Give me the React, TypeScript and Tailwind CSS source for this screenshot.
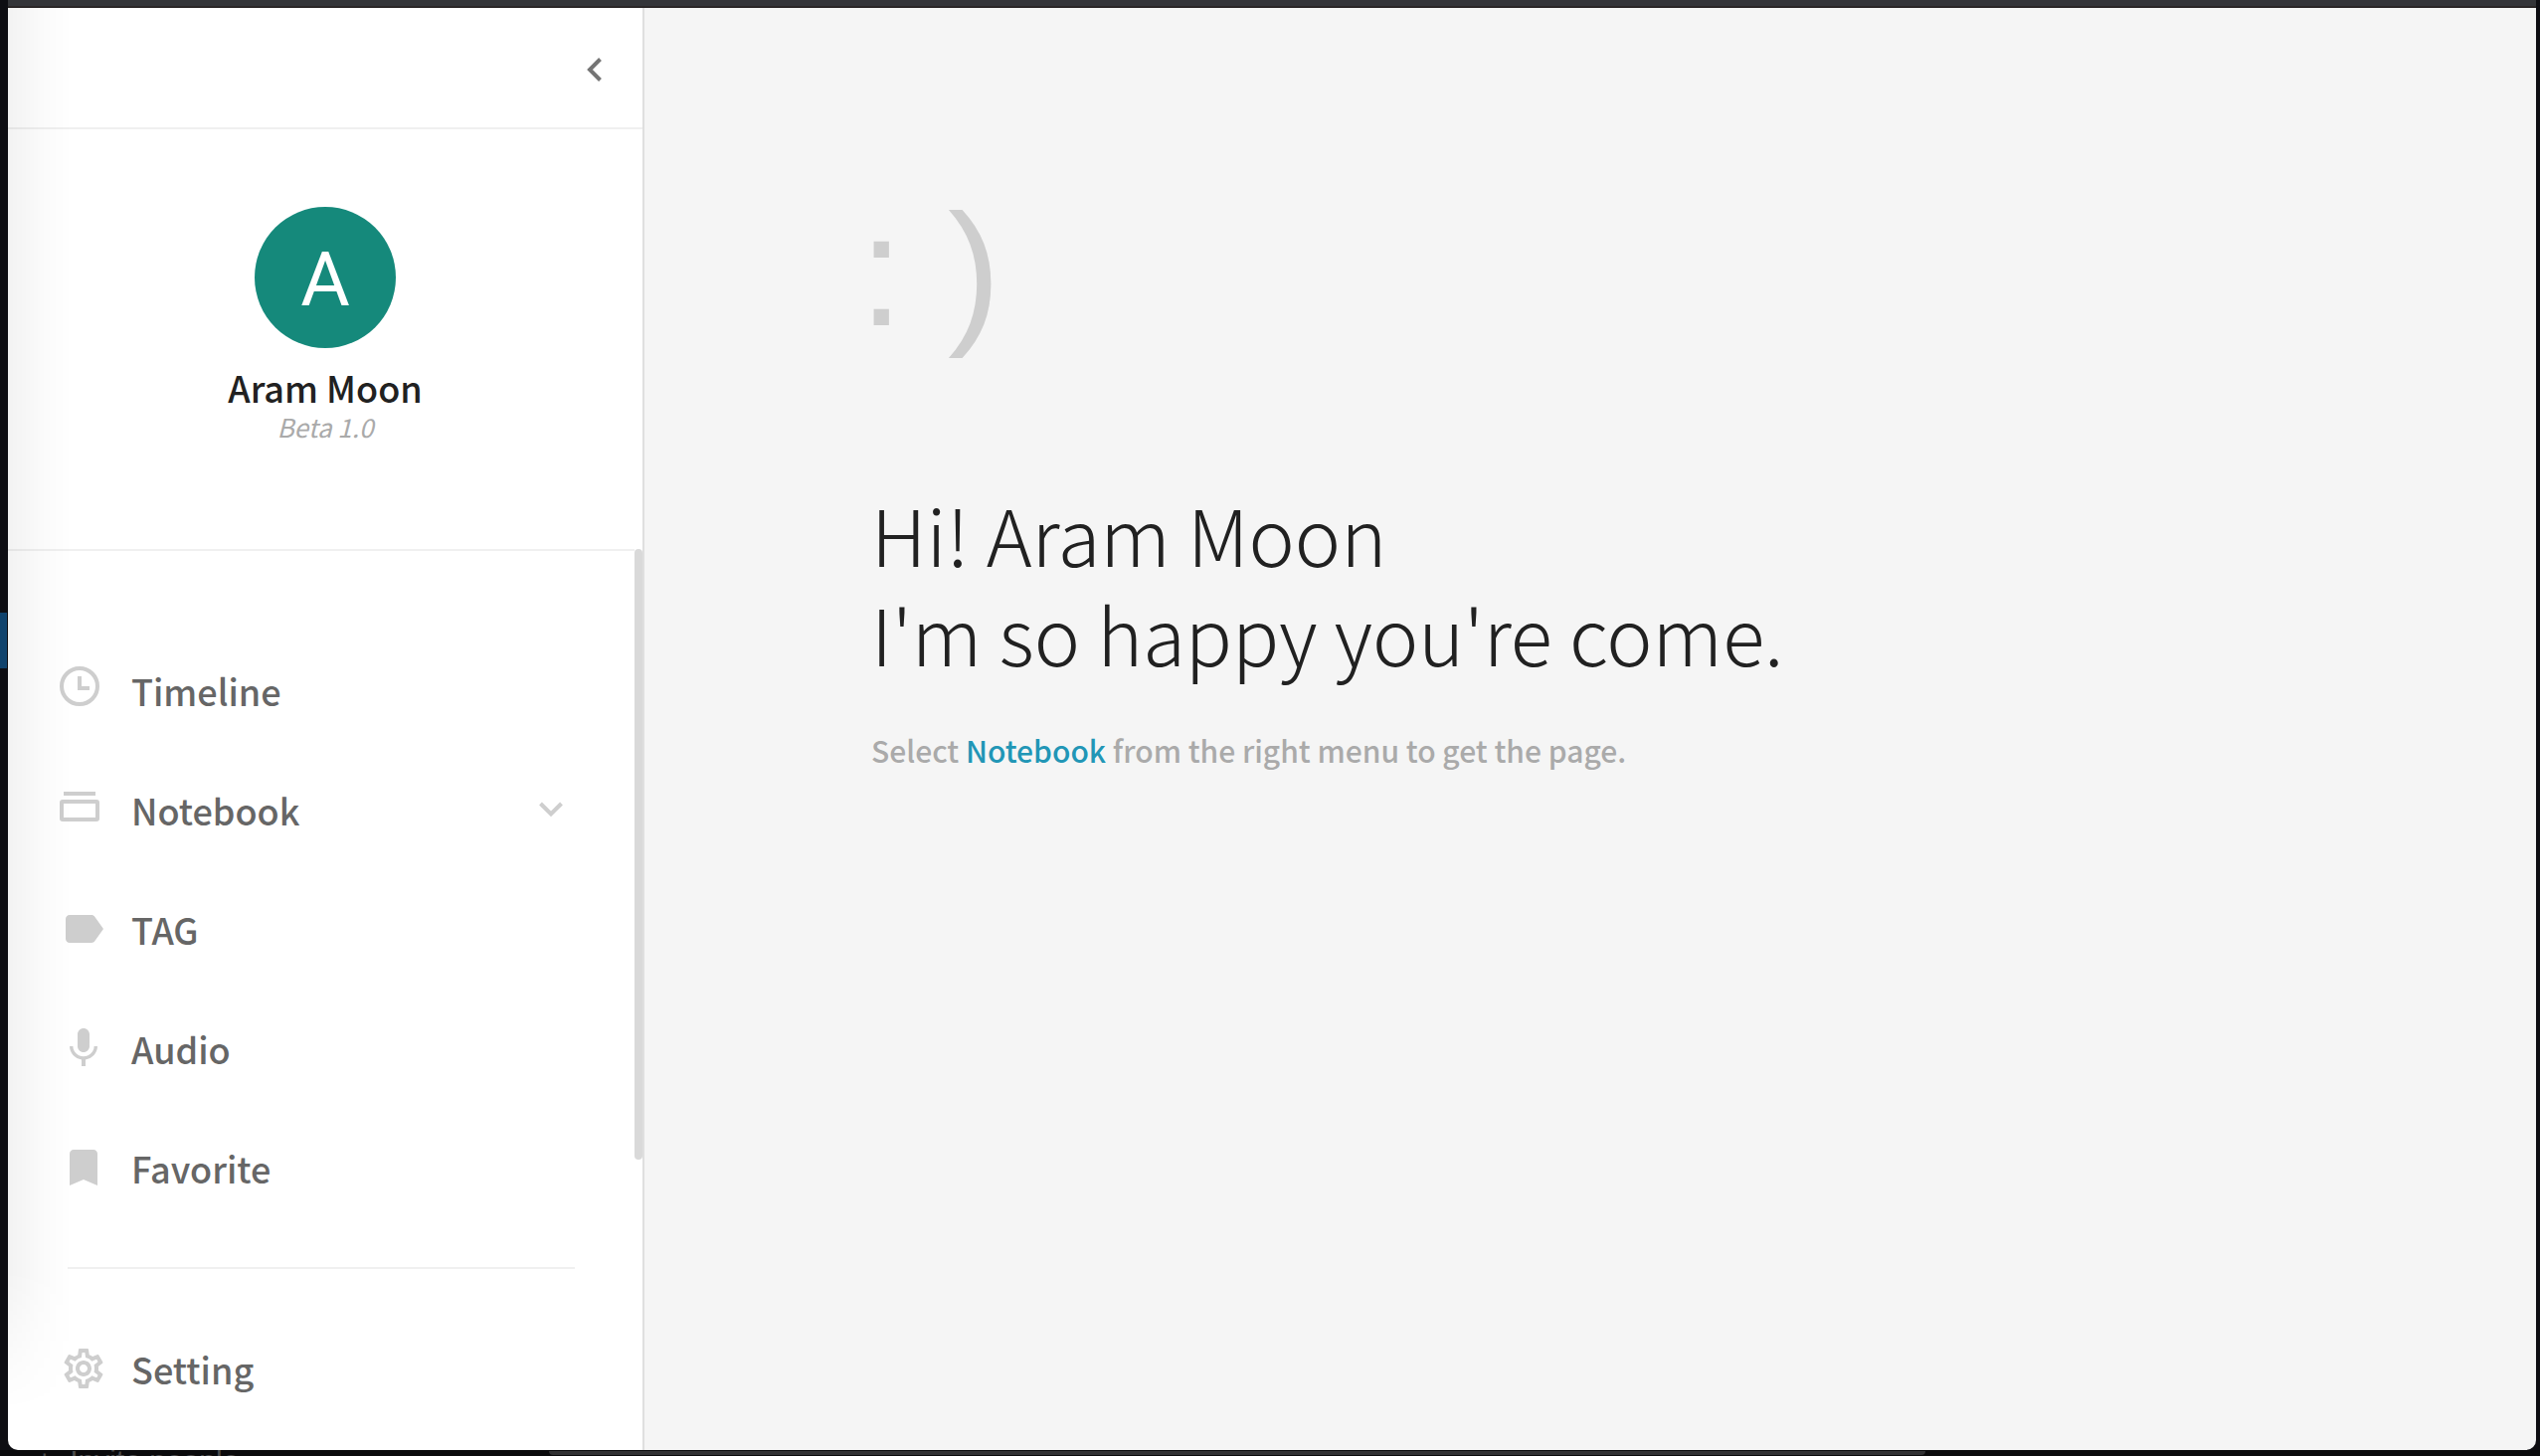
import React from 'react';
import { MdBookmark, MdLabel, MdMic } from 'react-icons/md';

interface MenuItem {
  label: string;
  icon: React.ReactNode;
  expandable?: boolean;
}

const ClockIcon = () => (
  <svg viewBox="0 0 40 40" className="size-10" fill="none" stroke="currentColor" strokeWidth="4">
    <circle cx="20" cy="20" r="18" />
    <path d="M20 10v12h10" />
  </svg>
);

const NotebookIcon = () => (
  <svg viewBox="0 0 40 40" className="size-10" fill="none" stroke="currentColor" strokeWidth="4">
    <path d="M4 8h32" />
    <rect x="2" y="16" width="36" height="18" rx="1" />
  </svg>
);

const SettingIcon = () => (
  <svg viewBox="0 0 24 24" className="size-12" fill="currentColor">
    <path d="M19.43 12.98c.04-.32.07-.64.07-.98 0-.34-.03-.66-.07-.98l2.11-1.65c.19-.15.24-.42.12-.64l-2-3.46c-.09-.16-.26-.25-.44-.25-.06 0-.12.01-.17.03l-2.49 1c-.52-.4-1.08-.73-1.69-.98l-.38-2.65C14.46 2.18 14.25 2 14 2h-4c-.25 0-.46.18-.49.42l-.38 2.65c-.61.25-1.17.59-1.69.98l-2.49-1c-.06-.02-.12-.03-.18-.03-.17 0-.34.09-.43.25l-2 3.46c-.13.22-.07.49.12.64l2.11 1.65c-.04.32-.07.65-.07.98 0 .33.03.66.07.98l-2.11 1.65c-.19.15-.24.42-.12.64l2 3.46c.09.16.26.25.44.25.06 0 .12-.01.17-.03l2.49-1c.52.4 1.08.73 1.69.98l.38 2.65c.03.24.24.42.49.42h4c.25 0 .46-.18.49-.42l.38-2.65c.61-.25 1.17-.59 1.69-.98l2.49 1c.06.02.12.03.18.03.17 0 .34-.09.43-.25l2-3.46c.12-.22.07-.49-.12-.64l-2.11-1.65zm-1.98-1.71c.04.31.05.52.05.73 0 .21-.02.43-.05.73l-.14 1.13.89.7 1.08.84-.7 1.21-1.27-.51-1.04-.42-.9.68c-.43.32-.84.56-1.25.73l-1.06.43-.16 1.13-.2 1.35h-1.4l-.19-1.35-.16-1.13-1.06-.43c-.43-.18-.83-.41-1.23-.71l-.91-.7-1.06.43-1.27.51-.7-1.21 1.08-.84.89-.7-.14-1.13c-.03-.31-.05-.54-.05-.74s.02-.43.05-.73l.14-1.13-.89-.7-1.08-.84.7-1.21 1.27.51 1.04.42.9-.68c.43-.32.84-.56 1.25-.73l1.06-.43.16-1.13.2-1.35h1.39l.19 1.35.16 1.13 1.06.43c.43.18.83.41 1.23.71l.91.7 1.06-.43 1.27-.51.7 1.21-1.07.85-.89.7.14 1.13zM12 8c-2.21 0-4 1.79-4 4s1.79 4 4 4 4-1.79 4-4-1.79-4-4-4zm0 6c-1.1 0-2-.9-2-2s.9-2 2-2 2 .9 2 2-.9 2-2 2z" />
  </svg>
);

const menu: MenuItem[] = [
  { label: 'Timeline', icon: <ClockIcon /> },
  { label: 'Notebook', icon: <NotebookIcon />, expandable: true },
  { label: 'TAG', icon: <MdLabel className="size-12" /> },
  { label: 'Audio', icon: <MdMic className="size-12" /> },
  { label: 'Favorite', icon: <MdBookmark className="size-12" /> },
];

const MenuRow: React.FC<{ item: MenuItem }> = ({ item }) => (
  <li>
    <button className="flex h-[120px] w-full items-center pr-18 pl-13 text-left">
      <span className="size-12 shrink-0 text-[#cecece]">{item.icon}</span>
      <span className="ml-6 flex-1 text-4xl font-medium text-[#666]">{item.label}</span>
      {item.expandable && (
        <svg viewBox="0 0 24 16" className="h-4 w-6 text-[#cecece]" fill="none" stroke="currentColor" strokeWidth="4">
          <path d="M1.5 2 12 12.5 22.5 2" />
        </svg>
      )}
    </button>
  </li>
);

const Sidebar = () => (
  <aside className="relative flex w-[640px] shrink-0 flex-col border-r-2 border-[#dfdfdf] bg-white">
    <div className="flex h-[122px] items-center justify-end border-b-2 border-[#f0f0f0] pt-1 pr-10">
      <button aria-label="Close menu" className="text-[#757575]">
        <svg viewBox="0 0 16 24" className="h-6 w-4" fill="none" stroke="currentColor" strokeWidth="4">
          <path d="M13.5 1.5 3 12 13.5 22.5" />
        </svg>
      </button>
    </div>

    <div className="flex h-[422px] flex-col items-center pt-[78px]">
      <div className="flex size-[142px] items-center justify-center rounded-full bg-[#15897b] pt-1 font-['Roboto'] text-[76px] text-white">A</div>
      <p className="mt-4 text-4xl leading-[46px] font-medium text-[#212121]">Aram Moon</p>
      <p className="text-[26px] leading-[34px] text-[#aaa] italic">Beta 1.0</p>
    </div>

    <nav className="flex flex-1">
      <div className="flex-1 border-t-2 border-[#f0f0f0] pt-20">
        <ul>
          {menu.map((item) => (
            <MenuRow key={item.label} item={item} />
          ))}
        </ul>
        <hr className="mx-15 mt-10 border-t-2 border-[#f0f0f0]" />
        <ul className="mt-10">
          <MenuRow item={{ label: 'Setting', icon: <SettingIcon /> }} />
        </ul>
      </div>
      <div className="h-[614px] w-2 rounded-full bg-[#d9d9d9]" />
    </nav>

    {/* soft shade along the left edge */}
    <div className="pointer-events-none absolute top-0 bottom-10 left-0 w-16 bg-linear-to-r from-black/5 via-black/2 to-transparent mask-b-from-90%" />
  </aside>
);

const Welcome = () => (
  <main className="flex-1 bg-[#f5f5f5] pt-[172px] pl-[228px]">
    <p className="-ml-3 font-['Liberation_Sans'] text-[160px] leading-[184px] text-[#cecece]">: )</p>
    <h1 className="mt-[122px] text-[78px] leading-[100px] font-light text-[#212121]">
      Hi! Aram Moon
      <br />
      I'm so happy you're come.
    </h1>
    <p className="mt-11 text-[30px] leading-[48px] font-medium text-[#aaa]">
      Select <a href="#notebook" className="text-[#2196b6]">Notebook</a> from the right menu to get the page.
    </p>
  </main>
);

export default function App() {
  return (
    <div className="flex min-h-screen flex-col bg-[#0e0e13] font-['Noto_Sans_CJK_KR','Noto_Sans',sans-serif]">
      <div className="mr-1 ml-2 h-2 border-b-2 border-[#2a2627] bg-[#343539]" />
      <div className="flex flex-1">
        <div className="flex w-2 shrink-0 flex-col">
          <div className="mt-[608px] h-14 w-[7px] bg-[#10436d]" />
        </div>
        <div className="flex flex-1 overflow-hidden rounded-b-[10px]">
          <Sidebar />
          <Welcome />
        </div>
        <div className="w-1 shrink-0" />
      </div>
      <div className="flex h-1.5 overflow-hidden bg-[#0a0a0c] pt-px pl-9">
        <p className="w-[516px] font-['Liberation_Sans'] text-[30px] leading-5 whitespace-pre text-[#4a4a4c]">+  Invite people</p>
        <div className="h-1 w-[1384px] rounded-b-full bg-[#303032]" />
      </div>
    </div>
  );
}
